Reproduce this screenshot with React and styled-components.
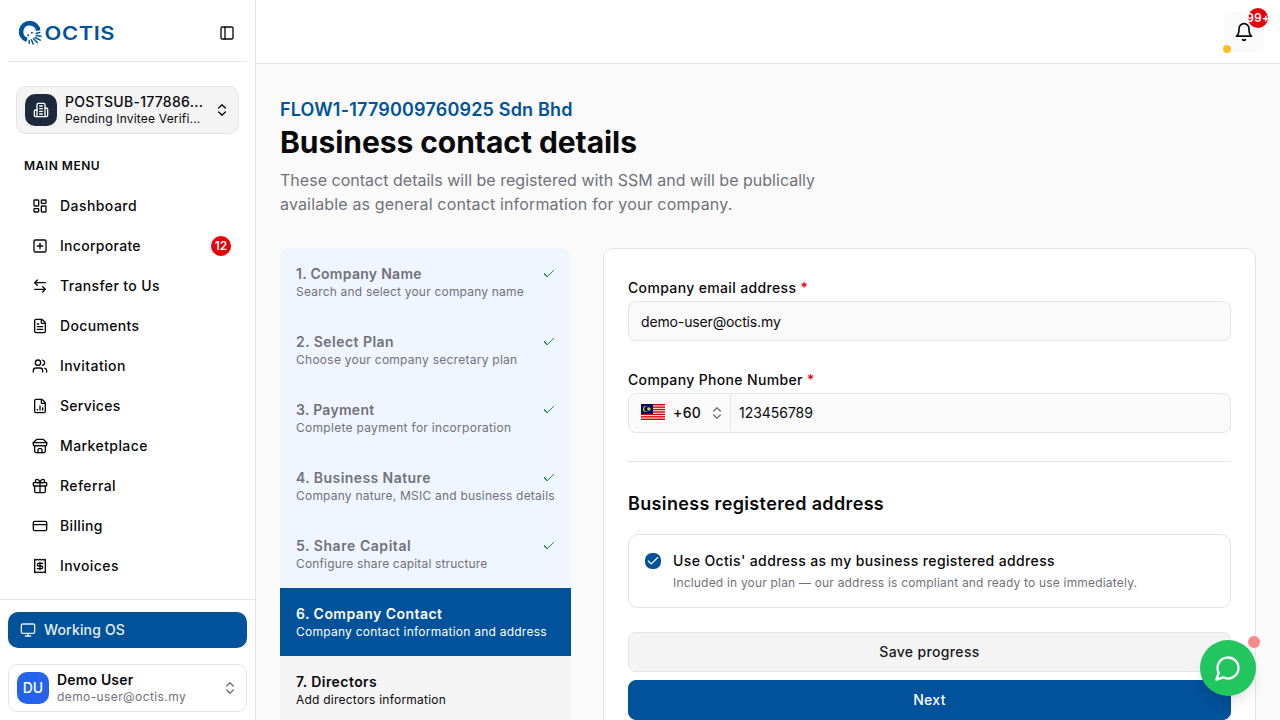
import React from 'react';
import styled, { createGlobalStyle, css } from 'styled-components';
import {
  PanelLeft, ChevronsUpDown, LayoutDashboard, SquarePlus, ArrowLeftRight, FileText,
  Users, FileChartColumn, CreditCard, Monitor, Check,
} from 'lucide-react';

const Global = createGlobalStyle`
  *, *::before, *::after { box-sizing: border-box; }
  body { margin: 0; background: #fafafa; overflow: hidden; }
  h1, h2, p { margin: 0; }
  button, input { font: inherit; color: inherit; letter-spacing: inherit; }
`;

const Shell = styled.div`
  display: flex;
  height: 100vh;
  overflow: hidden;
  font-family: Inter, "Liberation Sans", sans-serif;
  font-size: 14px;
  line-height: 20px;
  letter-spacing: 0.025em;
  color: #09090b;
`;

const tracking = css`
  ${(p) => p.$track !== undefined && css`letter-spacing: ${p.$track}px;`}
`;

const Sidebar = styled.aside`
  width: 256px;
  flex: none;
  display: flex;
  flex-direction: column;
  background: #fff;
  border-right: 1px solid #e4e4e7;
`;

const SidebarHead = styled.div`
  height: 62px;
  flex: none;
  margin: 0 8px;
  padding: 4px 12px 0 9px;
  display: flex;
  align-items: center;
  justify-content: space-between;
  border-bottom: 1px solid #e4e4e7;
`;

const AccountCard = styled.button`
  flex: none;
  height: 48px;
  display: flex;
  align-items: center;
  gap: 8px;
  text-align: left;
  padding: 0 8px;
  border: 1px solid #e4e4e7;
  border-radius: 10px;
  background: ${(p) => (p.$filled ? '#f4f4f5' : '#fff')};
`;

const Workspace = styled(AccountCard)`
  margin: 24px 16px 0;
`;

const Avatar = styled.span`
  width: 32px;
  height: 32px;
  flex: none;
  display: grid;
  place-items: center;
  border-radius: 10px;
  color: #fff;
  letter-spacing: 0;
  font-weight: 500;
  background: ${(p) => p.$tone};
`;

const AccountText = styled.span`
  flex: 1;
  min-width: 0;
  display: flex;
  flex-direction: column;
  gap: 1px;
  white-space: nowrap;
`;

const AccountName = styled.span`
  line-height: 17px;
  font-weight: ${(p) => p.$weight || 500};
  ${tracking}
`;

const AccountNote = styled.span`
  font-size: 12px;
  line-height: 16px;
  color: ${(p) => (p.$muted ? '#71717a' : 'inherit')};
  ${tracking}
`;

const ChevronSlot = styled.span`
  display: flex;
  flex: none;
  color: ${(p) => (p.$muted ? '#71717a' : 'inherit')};
`;

const MenuLabel = styled.div`
  flex: none;
  padding: 24px 24px 0;
  font-size: 12px;
  line-height: 16px;
  font-weight: 600;
  letter-spacing: 0.52px;
`;

const Menu = styled.nav`
  flex: 1;
  min-height: 0;
  overflow: hidden;
  margin-top: 12px;
  padding: 0 24px;
`;

const MenuItem = styled.a`
  height: 40px;
  padding: 0 0 0 8px;
  display: flex;
  align-items: center;
  gap: 12px;
  font-weight: 500;
  ${tracking}
`;

const CountBadge = styled.span`
  width: 20px;
  height: 20px;
  margin-left: auto;
  border-radius: 50%;
  background: #e7000b;
  color: #fff;
  display: grid;
  place-items: center;
  font-size: 12px;
  font-weight: 600;
  letter-spacing: 0;
`;

const SidebarFoot = styled.div`
  flex: none;
  height: 121px;
  border-top: 1px solid #e4e4e7;
  padding: 12px 8px 8px;
  display: flex;
  flex-direction: column;
  gap: 16px;
`;

const WorkButton = styled.button`
  height: 36px;
  flex: none;
  border: 0;
  border-radius: 10px;
  background: #00529b;
  color: #e6eef5;
  font-weight: 500;
  letter-spacing: 0.16px;
  display: flex;
  align-items: center;
  gap: 8px;
  padding: 0 12px;
`;

const Main = styled.main`
  flex: 1;
  min-width: 0;
`;

const TopBar = styled.header`
  height: 64px;
  background: #fff;
  border-bottom: 1px solid #e4e4e7;
  display: flex;
  align-items: center;
  justify-content: flex-end;
  padding: 0 16px;
`;

const BellButton = styled.div`
  position: relative;
  width: 40px;
  height: 40px;
  border-radius: 10px;
  background: #fafafa;
  display: grid;
  place-items: center;
`;

const BellCount = styled.span`
  position: absolute;
  top: -4px;
  right: -4px;
  width: 20px;
  height: 20px;
  border-radius: 50%;
  background: #e7000b;
  color: #fff;
  display: flex;
  align-items: center;
  justify-content: center;
  font-size: 12px;
  font-weight: 600;
  letter-spacing: 0.1px;
`;

const Dot = styled.span`
  position: absolute;
  border-radius: 50%;
  width: ${(p) => p.$size}px;
  height: ${(p) => p.$size}px;
  background: ${(p) => p.$color};
  ${(p) => p.$corner === 'bottom-left' && css`left: -1px; bottom: -1px;`}
  ${(p) => p.$corner === 'top-right' && css`right: -4px; top: -4px;`}
`;

const Content = styled.div`
  padding: 32px 24px 0;
`;

const CompanyName = styled.p`
  font-size: 18px;
  line-height: 28px;
  font-weight: 600;
  letter-spacing: 0.18px;
  color: #00529b;
`;

const Title = styled.h1`
  font-size: 30px;
  line-height: 36px;
  font-weight: 700;
  letter-spacing: -0.05px;
`;

const Lead = styled.p`
  margin-top: 8px;
  max-width: 576px;
  font-size: 16px;
  line-height: 24px;
  color: #71717a;
`;

const LeadLine = styled.span`
  ${tracking}
`;

const Columns = styled.div`
  margin-top: 32px;
  display: grid;
  grid-template-columns: 291px 1fr;
  gap: 32px;
  align-items: start;
`;

const Steps = styled.ol`
  list-style: none;
  margin: 0;
  padding: 0 0 80px;
  border-radius: 10px;
  overflow: hidden;
  background: #f4f4f5;
`;

const stepTones = {
  done: css`background: #eff6ff; color: #71717a;`,
  active: css`background: #00529b; color: #fff;`,
  next: css`background: #f4f4f5; color: #09090b;`,
};

const Step = styled.li`
  height: 68px;
  padding: 16px;
  white-space: nowrap;
  ${(p) => stepTones[p.$state]}
`;

const StepTitle = styled.div`
  display: flex;
  align-items: center;
  justify-content: space-between;
  font-weight: 600;
  ${tracking}
`;

const StepNote = styled.div`
  font-size: 12px;
  line-height: 16px;
  ${tracking}
`;

const StepTick = styled.svg`
  width: 12px;
  height: 12px;
  fill: none;
  stroke: #16a34a;
  shape-rendering: crispEdges;
`;

const FormCard = styled.section`
  border: 1px solid #e4e4e7;
  border-radius: 10px;
  background: #fff;
  padding: 29px 24px 24px;
`;

const Field = styled.label`
  display: block;
  margin-bottom: ${(p) => p.$gap}px;
`;

const FieldLabel = styled.span`
  display: block;
  font-weight: 500;
  margin-bottom: 3px;
`;

const Required = styled.span`
  color: #e7000b;
`;

const ControlBox = styled.span`
  display: flex;
  align-items: center;
  height: 40px;
  border: 1px solid #e4e4e7;
  border-radius: 8px;
  background: #fafafa;
  overflow: hidden;
`;

const TextInput = styled.input`
  flex: 1;
  min-width: 0;
  height: 100%;
  border: 0;
  outline: 0;
  background: transparent;
  padding: 0 ${(p) => p.$pad}px ${(p) => p.$lift || 0}px;
  ${tracking}
`;

const DialCode = styled.span`
  display: flex;
  align-items: center;
  width: 102px;
  height: 36px;
  padding: 0 5px 0 12px;
  border-right: 1px solid #e4e4e7;
  font-weight: 500;
`;

const DialNumber = styled.span`
  flex: 1;
  padding-left: 8px;
`;

const Divider = styled.hr`
  height: 1px;
  border: 0;
  margin: 0;
  background: #e4e4e7;
`;

const SectionTitle = styled.h2`
  margin: 28px 0 16px;
  font-size: 18px;
  line-height: 28px;
  font-weight: 600;
`;

const OptionCard = styled.div`
  height: 74px;
  border: 1px solid #e4e4e7;
  border-radius: 10px;
  padding: 16px;
  display: flex;
  gap: 12px;
`;

const CheckDisc = styled.span`
  width: 16px;
  height: 16px;
  margin-top: 2px;
  flex: none;
  border-radius: 7px;
  display: grid;
  place-items: center;
  background: #00529b;
  color: #fff;
`;

const OptionTitle = styled.div`
  font-weight: 500;
  letter-spacing: 0.38px;
`;

const OptionNote = styled.div`
  margin-top: 4px;
  font-size: 12px;
  line-height: 16px;
  letter-spacing: 0.19px;
  color: #71717a;
`;

const Actions = styled.div`
  margin-top: 24px;
  display: flex;
  flex-direction: column;
  gap: 8px;
`;

const ActionButton = styled.button`
  height: 40px;
  border-radius: 8px;
  font-weight: 500;
  border: 1px solid ${(p) => (p.$primary ? '#00529b' : '#e4e4e7')};
  background: ${(p) => (p.$primary ? '#00529b' : '#f4f4f5')};
  color: ${(p) => (p.$primary ? '#fff' : '#18181b')};
`;

const ChatBubble = styled.button`
  position: fixed;
  right: 24px;
  bottom: 24px;
  width: 56px;
  height: 56px;
  border: 0;
  border-radius: 50%;
  padding: 0;
  display: grid;
  place-items: center;
  color: #fff;
  background: #22c55e;
  box-shadow: 0 10px 15px -3px rgba(0, 0, 0, 0.1), 0 4px 6px -4px rgba(0, 0, 0, 0.1);
`;

const Brand = () => (
  <svg width="100" height="28" viewBox="0 0 100 28" aria-label="Octis">
    <g fill="none" stroke="#00529b">
      <path d="M10 20.9A8.6 8.6 0 1 1 21.2 11.6" strokeWidth="4.6" />
      <g strokeWidth="1.5" strokeLinecap="round">
        <path d="M19.2 14.4 22.6 13.6" />
        <path d="M19.2 16.5 24 17.2" />
        <path d="M18.2 18.5 23.2 21.2" />
        <path d="M16.6 19.8 20.3 23.6" />
        <path d="M14.4 20.8 16.2 25" />
        <path d="M12.1 21.6 12.4 24.4" />
      </g>
    </g>
    <circle cx="11.2" cy="16.2" r="1" fill="#00529b" />
    <circle cx="14.9" cy="13.7" r="1" fill="#00529b" />
    <text x="27.6" y="20.8" textLength="70.5" lengthAdjust="spacingAndGlyphs" fill="#00529b"
      fontFamily="Inter, sans-serif" fontSize="18.5" fontWeight="600" letterSpacing="0.5">OCTIS</text>
  </svg>
);

const FlagImage = styled.svg`
  margin-bottom: 1px;
`;

const Flag = () => (
  <FlagImage width="24" height="17" viewBox="0 0 24 17">
    <rect width="24" height="17" fill="#fff" />
    {[0, 1, 2, 3, 4, 5, 6].map((i) => (
      <rect key={i} y={i * 2.43} width="24" height="1.4" fill="#c00" />
    ))}
    <rect width="12" height="9.9" fill="#006" />
    <circle cx="5" cy="5" r="3.1" fill="#fc0" />
    <circle cx="5.9" cy="5" r="2.7" fill="#006" />
    <circle cx="7.9" cy="5" r="1.8" fill="#fc0" />
  </FlagImage>
);

const LineIcon = styled.svg.attrs((p) => ({ viewBox: '0 0 24 24', width: p.size || 16, height: p.size || 16 }))`
  fill: none;
  stroke: currentColor;
  stroke-width: 2;
  stroke-linecap: round;
  stroke-linejoin: round;
`;

const BuildingIcon = () => (
  <LineIcon>
    <path d="M6 22V4a2 2 0 0 1 2-2h8a2 2 0 0 1 2 2v18Z" />
    <path d="M6 12H4a2 2 0 0 0-2 2v6a2 2 0 0 0 2 2h2M18 9h2a2 2 0 0 1 2 2v9a2 2 0 0 1-2 2h-2" />
    <path d="M10 6h4M10 10h4M10 14h4M10 18h4" />
  </LineIcon>
);

const StoreIcon = () => (
  <LineIcon>
    <path d="m2 7 4.41-4.41A2 2 0 0 1 7.83 2h8.34a2 2 0 0 1 1.42.59L22 7" />
    <path d="M4 12v8a2 2 0 0 0 2 2h12a2 2 0 0 0 2-2v-8" />
    <path d="M15 22v-4a2 2 0 0 0-2-2h-2a2 2 0 0 0-2 2v4M2 7h20" />
    <path d="M22 7v3a2 2 0 0 1-2 2a2.7 2.7 0 0 1-1.59-.63.7.7 0 0 0-.82 0A2.7 2.7 0 0 1 16 12a2.7 2.7 0 0 1-1.59-.63.7.7 0 0 0-.82 0A2.7 2.7 0 0 1 12 12a2.7 2.7 0 0 1-1.59-.63.7.7 0 0 0-.82 0A2.7 2.7 0 0 1 8 12a2.7 2.7 0 0 1-1.59-.63.7.7 0 0 0-.82 0A2.7 2.7 0 0 1 4 12a2 2 0 0 1-2-2V7" />
  </LineIcon>
);

const GiftIcon = () => (
  <LineIcon>
    <rect x="2" y="7" width="20" height="5" rx="1" />
    <path d="M20 12v8a2 2 0 0 1-2 2H6a2 2 0 0 1-2-2v-8M12 22V7" />
    <path d="M12 7H7.5a2.5 2.5 0 0 1 0-5C11 2 12 7 12 7ZM12 7h4.5a2.5 2.5 0 0 0 0-5C13 2 12 7 12 7Z" />
  </LineIcon>
);

const InvoiceIcon = () => (
  <LineIcon>
    <path d="M4 2v20l2-1 2 1 2-1 2 1 2-1 2 1 2-1 2 1V2l-2 1-2-1-2 1-2-1-2 1-2-1-2 1Z" />
    <path d="M16 8h-6a2 2 0 1 0 0 4h4a2 2 0 1 1 0 4H8M12 17.5v-11" />
  </LineIcon>
);

const BellIcon = () => (
  <LineIcon size={20}>
    <path d="M6 8a6 6 0 0 1 12 0c0 7 3 9 3 9H3s3-2 3-9" />
    <path d="M10.3 21a1.94 1.94 0 0 0 3.4 0" />
  </LineIcon>
);

const ChatIcon = () => (
  <LineIcon size={28}>
    <path d="M7.9 20A9 9 0 1 0 4 16.1L2 22Z" />
  </LineIcon>
);

const menu = [
  { label: 'Dashboard', Icon: LayoutDashboard, track: 0.44 },
  { label: 'Incorporate', Icon: SquarePlus, track: 0.29, count: 12 },
  { label: 'Transfer to Us', Icon: ArrowLeftRight, track: 0.38 },
  { label: 'Documents', Icon: FileText },
  { label: 'Invitation', Icon: Users, track: 0.42 },
  { label: 'Services', Icon: FileChartColumn, track: 0.28 },
  { label: 'Marketplace', Icon: StoreIcon, track: 0.41 },
  { label: 'Referral', Icon: GiftIcon, track: 0.42 },
  { label: 'Billing', Icon: CreditCard },
  { label: 'Invoices', Icon: InvoiceIcon, track: 0.4 },
];

const steps = [
  { title: '1. Company Name', note: 'Search and select your company name', state: 'done', track: [0.28, 0.2] },
  { title: '2. Select Plan', note: 'Choose your company secretary plan', state: 'done', track: [0.46, 0.26] },
  { title: '3. Payment', note: 'Complete payment for incorporation', state: 'done', track: [0.28, 0.29] },
  { title: '4. Business Nature', note: 'Company nature, MSIC and business details', state: 'done', track: [0.43, 0.21] },
  { title: '5. Share Capital', note: 'Configure share capital structure', state: 'done', track: [0.55, 0.15] },
  { title: '6. Company Contact', note: 'Company contact information and address', state: 'active', track: [0.46, 0.24] },
  { title: '7. Directors', note: 'Add directors information', state: 'next', track: [0.43, 0.23] },
];

export default function App() {
  return (
    <Shell>
      <Global />
      <Sidebar>
        <SidebarHead>
          <Brand />
          <PanelLeft size={16} />
        </SidebarHead>
        <Workspace $filled>
          <Avatar $tone="#1d293d"><BuildingIcon /></Avatar>
          <AccountText>
            <AccountName $track={0.27}>POSTSUB-177886...</AccountName>
            <AccountNote $track={0.19}>Pending Invitee Verifi...</AccountNote>
          </AccountText>
          <ChevronSlot><ChevronsUpDown size={16} /></ChevronSlot>
        </Workspace>
        <MenuLabel>MAIN MENU</MenuLabel>
        <Menu>
          {menu.map(({ label, Icon, track, count }) => (
            <MenuItem key={label} $track={track}>
              <Icon size={16} />
              {label}
              {count && <CountBadge>{count}</CountBadge>}
            </MenuItem>
          ))}
        </Menu>
        <SidebarFoot>
          <WorkButton><Monitor size={16} />Working OS</WorkButton>
          <AccountCard>
            <Avatar $tone="#2563eb">DU</Avatar>
            <AccountText>
              <AccountName $weight={600} $track={0.17}>Demo User</AccountName>
              <AccountNote $muted $track={0.4}>demo-user@octis.my</AccountNote>
            </AccountText>
            <ChevronSlot $muted><ChevronsUpDown size={16} /></ChevronSlot>
          </AccountCard>
        </SidebarFoot>
      </Sidebar>
      <Main>
        <TopBar>
          <BellButton>
            <BellIcon />
            <BellCount>99+</BellCount>
            <Dot $size={8} $color="#fbbf24" $corner="bottom-left" />
          </BellButton>
        </TopBar>
        <Content>
          <CompanyName>FLOW1-1779009760925 Sdn Bhd</CompanyName>
          <Title>Business contact details</Title>
          <Lead>
            <LeadLine $track={0.017}>These contact details will be registered with SSM and will be publically</LeadLine>
            <br />
            <LeadLine $track={0.155}>available as general contact information for your company.</LeadLine>
          </Lead>
          <Columns>
            <Steps>
              {steps.map(({ title, note, state, track }) => (
                <Step key={title} $state={state}>
                  <StepTitle $track={track[0]}>
                    {title}
                    {state === 'done' && (
                      <StepTick viewBox="0 0 12 12"><path d="M1 5.5 4.3 8.8 11 2.1" /></StepTick>
                    )}
                  </StepTitle>
                  <StepNote $track={track[1]}>{note}</StepNote>
                </Step>
              ))}
            </Steps>
            <FormCard>
              <Field $gap={29}>
                <FieldLabel>Company email address <Required>*</Required></FieldLabel>
                <ControlBox><TextInput $pad={12} $track={-0.14} defaultValue="demo-user@octis.my" /></ControlBox>
              </Field>
              <Field $gap={28}>
                <FieldLabel>Company Phone Number <Required>*</Required></FieldLabel>
                <ControlBox>
                  <DialCode>
                    <Flag />
                    <DialNumber>+60</DialNumber>
                    <ChevronSlot $muted><ChevronsUpDown size={16} /></ChevronSlot>
                  </DialCode>
                  <TextInput $pad={8} $lift={1} $track={-0.04} defaultValue="123456789" />
                </ControlBox>
              </Field>
              <Divider />
              <SectionTitle>Business registered address</SectionTitle>
              <OptionCard>
                <CheckDisc><Check size={14} /></CheckDisc>
                <div>
                  <OptionTitle>Use Octis' address as my business registered address</OptionTitle>
                  <OptionNote>Included in your plan — our address is compliant and ready to use immediately.</OptionNote>
                </div>
              </OptionCard>
              <Actions>
                <ActionButton>Save progress</ActionButton>
                <ActionButton $primary>Next</ActionButton>
              </Actions>
            </FormCard>
          </Columns>
        </Content>
      </Main>
      <ChatBubble>
        <ChatIcon />
        <Dot $size={12} $color="#f88b8b" $corner="top-right" />
      </ChatBubble>
    </Shell>
  );
}
